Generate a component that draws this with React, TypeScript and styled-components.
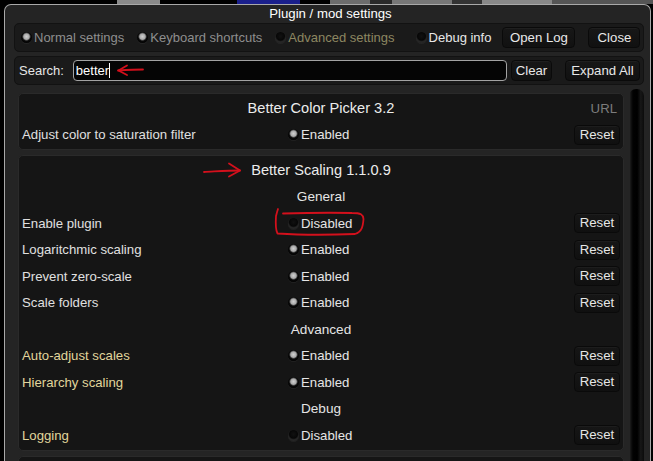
import React from 'react';
import styled, { createGlobalStyle } from 'styled-components';

const Global = createGlobalStyle`
  html, body { margin: 0; padding: 0; background: #000; }
  body {
    font-family: "Liberation Sans", Arial, sans-serif;
    font-size: 13.2px;
    width: 653px;
    height: 461px;
    overflow: hidden;
  }
  * { box-sizing: border-box; }
`;

const Screen = styled.div`
  position: relative;
  width: 653px;
  height: 461px;
  overflow: hidden;
  background: #000;
  display: flex;
  flex-direction: column;
`;

const Desktop = styled.div`
  height: 4px;
  flex-shrink: 0;
  display: flex;
`;

const Patch = styled.div<{ $w: number; $c: string }>`
  width: ${(p) => p.$w}px;
  height: 100%;
  background: ${(p) => p.$c};
  flex-shrink: 0;
`;

const Window = styled.div`
  margin-left: 4px;
  width: 647px;
  flex: 1;
  min-height: 0;
  border: 1px solid #a9a9a9;
  border-bottom: none;
  border-radius: 7px 7px 0 0;
  background: #242424;
  padding: 0 6px 0 9px;
  display: flex;
  flex-direction: column;
  overflow: hidden;
`;

const Title = styled.div`
  height: 18px;
  line-height: 17px;
  text-align: center;
  color: #fff;
  font-size: 13.2px;
  padding-left: 3px;
  flex-shrink: 0;
`;

const Bar = styled.div<{ $mt: number }>`
  margin-top: ${(p) => p.$mt}px;
  height: 29px;
  flex-shrink: 0;
  background: #1a1a1a;
  border: 1px solid #121212;
  border-radius: 5px;
  display: flex;
  align-items: center;
  padding: 0 3px 0 6px;
  color: #e6e6e6;
  font-size: 13px;
`;

const Option = styled.label<{ $gap: number; $tone: 'dim' | 'olive' | 'bright' }>`
  display: flex;
  align-items: center;
  gap: 2px;
  margin-right: ${(p) => p.$gap}px;
  white-space: nowrap;
  color: ${(p) => (p.$tone === 'dim' ? '#8e8e8e' : p.$tone === 'olive' ? '#8d8761' : '#e8e8e8')};
`;

const Dot = styled.span<{ $on: boolean }>`
  display: inline-block;
  width: 11px;
  height: 11px;
  border-radius: 50%;
  flex-shrink: 0;
  background: ${(p) =>
    p.$on
      ? 'radial-gradient(circle at 50% 42%, #d0d0d0 0, #a9a9a9 2.8px, #5a5a5a 3.5px, #0a0a0a 4.4px, #040404 5.5px)'
      : 'radial-gradient(circle at 50% 38%, #111 0, #070707 4px, #262626 5.5px)'};
  box-shadow: 0 1px 0 rgba(255, 255, 255, 0.05);
`;

const Button = styled.button<{ $w: number; $ml: number }>`
  width: ${(p) => p.$w}px;
  margin-left: ${(p) => p.$ml}px;
  height: 21px;
  flex-shrink: 0;
  padding: 0;
  border: 1px solid #0a0a0a;
  border-radius: 4px;
  background: linear-gradient(#171717, #111);
  box-shadow: inset 0 1px 0 #1f1f1f;
  color: #e8e8e8;
  font-family: "Liberation Sans", Arial, sans-serif;
  font-size: 13.2px;
  line-height: 19px;
`;

const SearchLabel = styled.span`
  margin-left: -2px;
  color: #e6e6e6;
  margin-right: 9px;
`;

const SearchInput = styled.div`
  flex: 1;
  height: 21px;
  border: 1px solid #a3a3a3;
  border-radius: 4px;
  background: #050505;
  color: #fff;
  padding-left: 2px;
  line-height: 19px;
  display: flex;
  align-items: center;
`;

const Caret = styled.span`
  display: inline-block;
  width: 1px;
  height: 15px;
  background: #fff;
`;

const ListArea = styled.div`
  margin-top: 4px;
  flex: 1;
  min-height: 0;
  display: flex;
  padding-left: 4px;
  gap: 5px;
`;

const Cards = styled.div`
  width: 606px;
  padding-top: 4px;
  display: flex;
  flex-direction: column;
  gap: 5px;
`;

const Scrollbar = styled.div`
  width: 15px;
  border-radius: 7px 7px 0 0;
  background: linear-gradient(to right, #2a2a2a 0, #121212 2px, #020202 4px, #000 55%, #171717 78%, #0b0b0b 100%);
`;

const Card = styled.div`
  flex-shrink: 0;
  min-height: 20px;
  background: #151515;
  border: 1px solid #2a2a2a;
  border-radius: 5px;
  padding: 1px 3px;
`;

const TitleRow = styled.div`
  height: 26.5px;
  display: grid;
  grid-template-columns: 1fr auto 1fr;
  align-items: center;
  font-size: 14.6px;
  color: #ececec;
`;

const Url = styled.span`
  justify-self: end;
  color: #7c7c7c;
  font-size: 13.2px;
  margin-right: 3px;
`;

const SectionHead = styled.div`
  height: 26.5px;
  display: flex;
  align-items: center;
  justify-content: center;
  color: #e4e4e4;
  font-size: 13.6px;
`;

const Row = styled.div`
  height: 26.5px;
  display: grid;
  grid-template-columns: 266px 1fr auto;
  align-items: center;
`;

const Label = styled.span<{ $adv?: boolean }>`
  color: ${(p) => (p.$adv ? '#e1d69c' : '#e0e0e0')};
`;

const Value = styled.span`
  display: flex;
  align-items: center;
  gap: 2px;
  color: #e6e6e6;
`;

const ResetButton = styled.button`
  width: 46px;
  height: 20px;
  padding: 0;
  border: 1px solid #0a0a0a;
  border-radius: 4px;
  background: linear-gradient(#161616, #101010);
  box-shadow: inset 0 1px 0 #1d1d1d;
  color: #e6e6e6;
  font-family: "Liberation Sans", Arial, sans-serif;
  font-size: 13.2px;
  line-height: 18px;
`;

const Overlay = styled.svg`
  position: absolute;
  left: 0;
  top: 0;
  pointer-events: none;
`;

type SettingProps = { label: string; on: boolean; adv?: boolean };

const Setting = ({ label, on, adv }: SettingProps) => (
  <Row>
    <Label $adv={adv}>{label}</Label>
    <Value>
      <Dot $on={on} />
      {on ? 'Enabled' : 'Disabled'}
    </Value>
    <ResetButton>Reset</ResetButton>
  </Row>
);

const sections: { head: string; items: SettingProps[] }[] = [
  {
    head: 'General',
    items: [
      { label: 'Enable plugin', on: false },
      { label: 'Logaritchmic scaling', on: true },
      { label: 'Prevent zero-scale', on: true },
      { label: 'Scale folders', on: true },
    ],
  },
  {
    head: 'Advanced',
    items: [
      { label: 'Auto-adjust scales', on: true, adv: true },
      { label: 'Hierarchy scaling', on: true, adv: true },
    ],
  },
  {
    head: 'Debug',
    items: [{ label: 'Logging', on: false, adv: true }],
  },
];

export default function App() {
  return (
    <Screen>
      <Global />
      <Desktop>
        <Patch $w={117} $c="#000" />
        <Patch $w={43} $c="#8a8a8a" />
        <Patch $w={77} $c="#000" />
        <Patch $w={63} $c="#1a1f8c" />
        <Patch $w={30} $c="#000" />
        <Patch $w={40} $c="#6d6d6d" />
        <Patch $w={22} $c="#2a2a2a" />
        <Patch $w={60} $c="#777" />
        <Patch $w={30} $c="#333" />
        <Patch $w={70} $c="#888" />
        <Patch $w={101} $c="#555" />
      </Desktop>
      <Window>
        <Title>Plugin / mod settings</Title>
        <Bar $mt={0}>
          <Option $gap={13} $tone="dim">
            <Dot $on />
            Normal settings
          </Option>
          <Option $gap={13} $tone="dim">
            <Dot $on />
            Keyboard shortcuts
          </Option>
          <Option $gap={21} $tone="olive">
            <Dot $on={false} />
            Advanced settings
          </Option>
          <Option $gap={0} $tone="bright">
            <Dot $on={false} />
            Debug info
          </Option>
          <Button $w={73} $ml={11}>Open Log</Button>
          <Button $w={52} $ml={13}>Close</Button>
        </Bar>
        <Bar $mt={4}>
          <SearchLabel>Search:</SearchLabel>
          <SearchInput>
            better
            <Caret />
          </SearchInput>
          <Button $w={41} $ml={4}>Clear</Button>
          <Button $w={75} $ml={13}>Expand All</Button>
        </Bar>
        <ListArea>
          <Cards>
            <Card>
              <TitleRow>
                <span />
                <span>Better Color Picker 3.2</span>
                <Url>URL</Url>
              </TitleRow>
              <Setting label="Adjust color to saturation filter" on />
            </Card>
            <Card>
              <TitleRow>
                <span />
                <span>Better Scaling 1.1.0.9</span>
                <span />
              </TitleRow>
              {sections.map((s) => (
                <React.Fragment key={s.head}>
                  <SectionHead>{s.head}</SectionHead>
                  {s.items.map((it) => (
                    <Setting key={it.label} {...it} />
                  ))}
                </React.Fragment>
              ))}
            </Card>
            <Card />
          </Cards>
          <Scrollbar />
        </ListArea>
      </Window>
      <Overlay width="653" height="461" viewBox="0 0 653 461">
        <g fill="none" stroke="#d3101c" strokeWidth="1.8" strokeLinecap="round" strokeLinejoin="round">
          <path d="M118 70.5 C126 70 134 69.5 143 69.5" />
          <path d="M127 65.5 L118.5 70.5 L127 75" />
          <path d="M204 172 C215 171.5 228 170.5 240 170.5" />
          <path d="M229 163.5 L240 170.5 L229 176.5" />
          <path d="M278 209 C277 212 276.5 214 276 216 C275.5 224 275.5 230 277.5 233.5 C300 235 330 235 355 234 C362 232 363 226 363.5 219 C363 214.5 361 213 352 213 C330 212.5 300 213 283 213.5" />
        </g>
      </Overlay>
    </Screen>
  );
}
